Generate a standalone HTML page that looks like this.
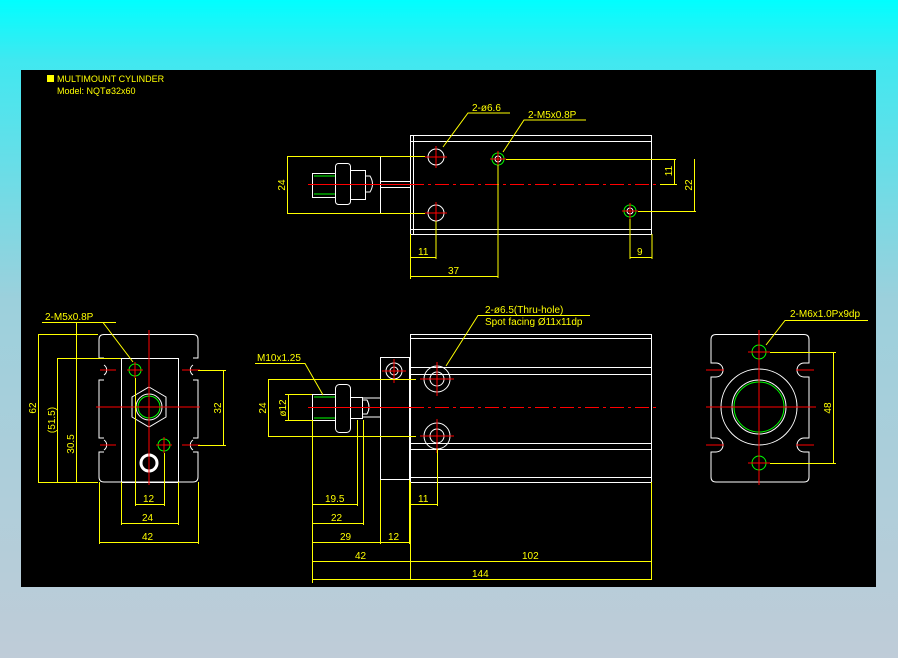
<!DOCTYPE html>
<html><head><style>
html,body{margin:0;padding:0;}
body{width:898px;height:658px;background:linear-gradient(#00ffff 0px,#40e8f0 60px,#9cd0dc 300px,#bfccd8 658px);overflow:hidden;position:relative;}
svg{position:absolute;left:0;top:0;}
text{font-family:"Liberation Sans",sans-serif;font-size:10px;fill:#ffff00;}
</style></head><body>
<svg width="898" height="658" viewBox="0 0 898 658">
<rect x="21" y="70" width="855" height="517" fill="#000"/>
<rect x="47" y="75" width="7" height="7" fill="#ffff00"/>
<text x="57" y="82" style="font-size:9px">MULTIMOUNT CYLINDER</text>
<text x="57" y="94" style="font-size:9px">Model: NQTø32x60</text>

<!-- TOP VIEW -->
<g fill="none" stroke-width="1">
<g stroke="#fff">
<rect x="410.5" y="135.5" width="241" height="99"/>
<line x1="410" y1="141.5" x2="652" y2="141.5"/>
<line x1="410" y1="229.5" x2="652" y2="229.5"/>
<line x1="413.5" y1="135" x2="413.5" y2="234"/>
<rect x="380.5" y="156.5" width="30" height="57"/>
<rect x="312.5" y="173.5" width="23" height="24"/>
<rect x="335.5" y="163.5" width="15" height="41" rx="3"/>
<rect x="350.5" y="170.5" width="15" height="29"/>
<path d="M365 176 h5 q5 8 0 16 h-5"/>
<line x1="380" y1="181.5" x2="410" y2="181.5"/>
<line x1="380" y1="187.5" x2="410" y2="187.5"/>
<circle cx="436" cy="157" r="8"/><circle cx="436" cy="213" r="8"/>
<circle cx="630" cy="211" r="3"/><circle cx="498" cy="159" r="3"/>
</g>
<g stroke="#00ff00"><circle cx="498" cy="159" r="6"/><circle cx="630" cy="211" r="6"/>
<line x1="314" y1="176" x2="335" y2="176"/><line x1="314" y1="194" x2="335" y2="194"/></g>
<g stroke="#ff0000">
<line x1="308" y1="184.5" x2="410" y2="184.5"/>
<line x1="410" y1="184.5" x2="656" y2="184.5" stroke-dasharray="14 4 3 4"/>
<path d="M425 157h22M436 146v22M425 213h22M436 202v22M490 159h16M498 151v16M622 211h16M630 203v16"/>
</g>
<g stroke="#ffff00">
<path d="M287 156.5h138M287 213.5h138M287.5 156v57M498 165v113M436 221v38M410.5 234v45M630 219v40M652 234v25M506 159.5h170M638 211.5h58M660 184.5h17M674.5 159v25M694.5 159v52"/>
<path d="M410 257.5h26M410 276.5h88M630 257.5h22"/>
<path d="M443 147L468 113H510M503 152L524 120H586"/>
</g>
</g>
<text x="472" y="111">2-ø6.6</text>
<text x="528" y="118">2-M5x0.8P</text>
<text x="418" y="255">11</text>
<text x="448" y="274">37</text>
<text x="637" y="255">9</text>
<text transform="translate(672,171) rotate(-90)" text-anchor="middle">11</text>
<text transform="translate(692,185) rotate(-90)" text-anchor="middle">22</text>
<text transform="translate(285,185) rotate(-90)" text-anchor="middle">24</text>

<!-- LEFT SIDE VIEW -->
<g fill="none">
<g stroke="#fff">
<path d="M104 334.5H193q5 0 5 5V358h-5M193 380h5V438h-5M193 452h5V477q0 5-5 5H104q-5 0-5-5V452h5M104 438h-5V380h5M104 358h-5V339.5q0-5 5-5"/>
<rect x="121.5" y="358.5" width="57" height="124"/>
<polygon points="149,387 166,397 166,417 149,427 132,417 132,397"/>
<circle cx="149" cy="407" r="13"/>
<circle cx="149" cy="463" r="8" stroke-width="3"/>
<path d="M104 365a6 6 0 0 1 0 10M193 365a6 6 0 0 0 0 10M104 440a6 6 0 0 1 0 10M193 440a6 6 0 0 0 0 10"/>
</g>
<g stroke="#00ff00"><circle cx="149" cy="407" r="11"/><circle cx="135" cy="370" r="6"/><circle cx="164" cy="445" r="6"/></g>
<g stroke="#ff0000">
<path d="M149 330v155M96 407h104M100 370h16M182 370h18M100 445h16M182 445h18M127 370h16M135 362v16M156 445h16M164 437v16"/>
</g>
<g stroke="#ffff00">
<path d="M38 334.5h60M38 482.5h60M57 358.5h64M76 322.5h40M38.5 335v147M57.5 358v124M76.5 322v160"/>
<path d="M198 370.5h28M198 445.5h28M223.5 370v75"/>
<path d="M135.5 378v128M164.5 453v53M121.5 482v43M178.5 482v43M99.5 482v62M198.5 482v62M135 504.5h29M121 523.5h57M99 542.5h99"/>
<path d="M42 322.5H103L133 362"/>
</g>
</g>
<text x="45" y="320">2-M5x0.8P</text>
<text transform="translate(36,408) rotate(-90)" text-anchor="middle">62</text>
<text transform="translate(55,420) rotate(-90)" text-anchor="middle">(51.5)</text>
<text transform="translate(74,444) rotate(-90)" text-anchor="middle">30.5</text>
<text transform="translate(221,408) rotate(-90)" text-anchor="middle">32</text>
<text x="143" y="502">12</text>
<text x="142" y="521">24</text>
<text x="142" y="540">42</text>

<!-- FRONT VIEW -->
<g fill="none">
<g stroke="#fff">
<rect x="410.5" y="334.5" width="241" height="148"/>
<path d="M411 338.5h241M411 367.5h241M411 374.5h241M411 443.5h241M411 449.5h241M411 477.5h241"/>
<rect x="380.5" y="357.5" width="29" height="122"/>
<circle cx="394" cy="371" r="8"/><circle cx="394" cy="371" r="4"/>
<circle cx="437" cy="379" r="13"/><circle cx="437" cy="379" r="7"/>
<circle cx="437" cy="436" r="13"/><circle cx="437" cy="436" r="7"/>
<rect x="312.5" y="394.5" width="23" height="26"/>
<rect x="335.5" y="384.5" width="15" height="48" rx="4"/>
<rect x="350.5" y="397.5" width="12" height="21"/>
<path d="M362 400h5q4 7 0 14h-5"/>
<line x1="362" y1="398" x2="380" y2="398"/><line x1="362" y1="417" x2="380" y2="417"/>
</g>
<g stroke="#00ff00"><path d="M314 397h21M314 418h21"/></g>
<g stroke="#ff0000">
<path d="M308 407.5h102"/>
<path d="M410 407.5h246" stroke-dasharray="14 4 3 4"/>
<path d="M420 379h34M437 362v34M420 436h34M437 419v34M382 371h24M394 359v24"/>
</g>
<g stroke="#ffff00">
<path d="M268 379.5h148M268 436.5h148M268.5 379v57M285 394.5h27M285 420.5h27M288.5 394v26"/>
<path d="M312.5 420v163M357.5 420v86M363.5 420v105M380.5 480v64M409.5 480v64M410.5 482v98M437.5 449v57M651.5 482v98"/>
<path d="M312 504.5h45M312 523.5h51M312 542.5h68M380 542.5h29M312 561.5h98M410 561.5h242M312 579.5h340M411 504.5h26"/>
<path d="M255 363.5H305L323 395M446 366L478 315.5H590"/>
</g>
</g>
<text x="257" y="361">M10x1.25</text>
<text x="485" y="313">2-ø6.5(Thru-hole)</text>
<text x="485" y="325">Spot facing Ø11x11dp</text>
<text transform="translate(266,408) rotate(-90)" text-anchor="middle">24</text>
<text transform="translate(286,408) rotate(-90)" text-anchor="middle">ø12</text>
<text x="325" y="502">19.5</text>
<text x="331" y="521">22</text>
<text x="340" y="540">29</text>
<text x="388" y="540">12</text>
<text x="355" y="559">42</text>
<text x="522" y="559">102</text>
<text x="472" y="577">144</text>
<text x="418" y="502">11</text>

<!-- RIGHT VIEW -->
<g fill="none">
<g stroke="#fff">
<path d="M716 334.5H804q5 0 5 5V363h-5M804 377h5V438h-5M804 452h5V477q0 5-5 5H716q-5 0-5-5V452h5M716 438h-5V377h5M716 363h-5V339.5q0-5 5-5"/>
<path d="M716 363a7 7 0 0 1 0 14M804 363a7 7 0 0 0 0 14M716 438a7 7 0 0 1 0 14M804 438a7 7 0 0 0 0 14"/>
<circle cx="759" cy="407" r="38"/><circle cx="759" cy="407" r="27"/>
</g>
<g stroke="#00ff00"><circle cx="759" cy="407" r="25"/><circle cx="759" cy="352" r="7"/><circle cx="759" cy="463" r="7"/></g>
<g stroke="#ff0000">
<path d="M759 330v155M706 407h110M706 370h18M796 370h18M706 445h18M796 445h18M748 352h22M748 463h22"/>
</g>
<g stroke="#ffff00">
<path d="M770 352.5h66M770 463.5h66M833.5 352v111M766 345L785 320.5H868"/>
</g>
</g>
<text x="790" y="317">2-M6x1.0Px9dp</text>
<text transform="translate(831,408) rotate(-90)" text-anchor="middle">48</text>
</svg>
</body></html>
